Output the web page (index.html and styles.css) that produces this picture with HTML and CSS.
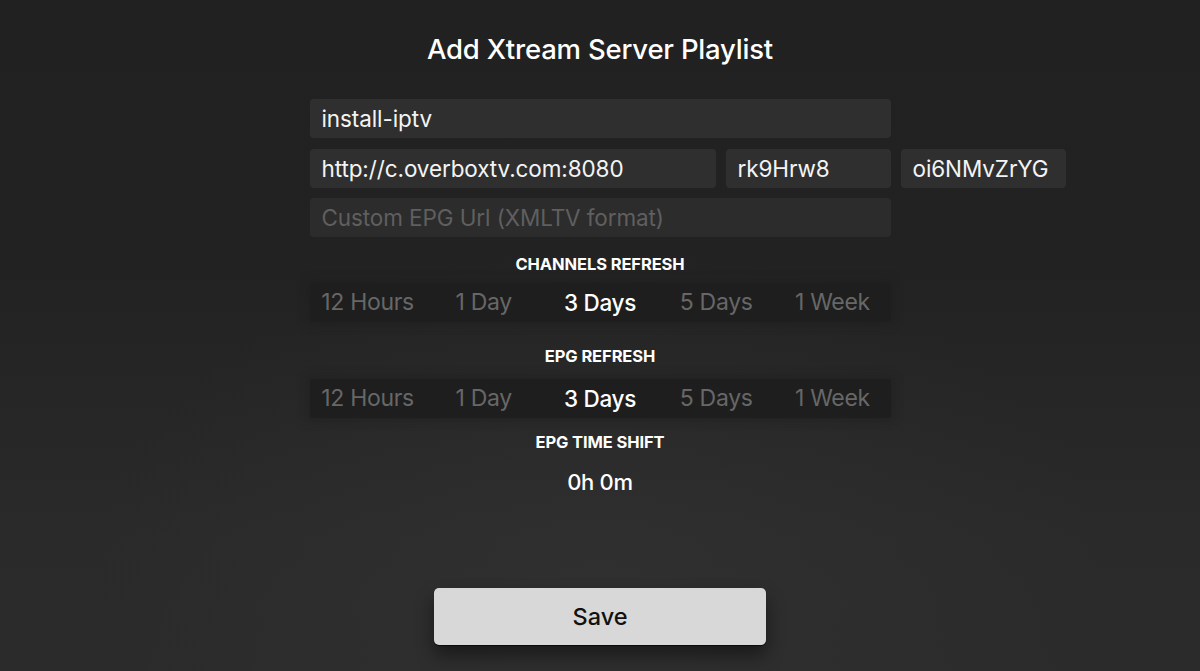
FILE: index.html
```html
<!DOCTYPE html>
<html>
<head>
<meta charset="utf-8">
<link rel="stylesheet" href="styles.css">
</head>
<body>
<main class="screen">
  <h1 class="title">Add Xtream Server Playlist</h1>
  <section class="form">
    <div class="field">install-iptv</div>
    <div class="row">
      <div class="field">http://c.overboxtv.com:8080</div>
      <div class="field">rk9Hrw8</div>
      <div class="field">oi6NMvZrYG</div>
    </div>
    <div class="field placeholder">Custom EPG Url (XMLTV format)</div>
  </section>
  <div class="label label-channels">CHANNELS REFRESH</div>
  <div class="segments seg-channels">
    <span class="opt">12 Hours</span>
    <span class="opt">1 Day</span>
    <span class="opt selected">3 Days</span>
    <span class="opt">5 Days</span>
    <span class="opt">1 Week</span>
  </div>
  <div class="label label-epg">EPG REFRESH</div>
  <div class="segments seg-epg">
    <span class="opt">12 Hours</span>
    <span class="opt">1 Day</span>
    <span class="opt selected">3 Days</span>
    <span class="opt">5 Days</span>
    <span class="opt">1 Week</span>
  </div>
  <div class="label label-shift">EPG TIME SHIFT</div>
  <div class="shift-value">0h 0m</div>
  <button class="save">Save</button>
</main>
</body>
</html>
```
FILE: styles.css
```css
* { box-sizing: border-box; }
html, body {
  margin: 0;
  padding: 0;
  height: 671px;
  overflow: hidden;
}
body {
  font-family: Inter, "Noto Sans", sans-serif;
  color: #fff;
  background:
    radial-gradient(ellipse 60% 70% at 50% 85%, rgba(60,60,60,0.3), rgba(0,0,0,0) 70%),
    linear-gradient(180deg, #212121 0%, #222222 40%, #2a2a2a 80%, #2b2b2b 100%);
}
.screen {
  display: flex;
  flex-direction: column;
  align-items: center;
  height: 671px;
}
.title {
  margin: 33px 0 0 0;
  font-size: 27.5px;
  line-height: 32px;
  font-weight: 500;
  letter-spacing: -0.2px;
}
.form {
  width: 581px;
  margin-top: 34px;
  display: flex;
  flex-direction: column;
  gap: 10px;
}
.row {
  display: grid;
  grid-template-columns: 406px 165px 165px;
  gap: 10px;
  width: 581px;
}
.field {
  height: 39px;
  background: #2f2f2f;
  border-radius: 4px;
  padding: 0 12px;
  font-size: 22.5px;
  line-height: 39px;
  color: #f4f4f4;
  white-space: nowrap;
  letter-spacing: -0.1px;
}
.form > .field:first-child { margin-bottom: 1px; }
.placeholder { color: #5f5f5f; background: #2c2c2c; }
.label {
  font-size: 16.5px;
  line-height: 20px;
  font-weight: 700;
  letter-spacing: -0.1px;
  color: #fff;
}
.label-channels { margin-top: 17px; }
.label-epg { margin-top: 24px; }
.label-shift { margin-top: 14px; }
.segments {
  width: 581px;
  height: 39px;
  display: grid;
  grid-template-columns: repeat(5, 1fr);
  align-items: center;
  background: #1e1e1e;
  border-radius: 3px;
  box-shadow: 0 0 8px 3px rgba(30,30,30,0.5);
}
.seg-channels { margin-top: 9px; }
.seg-epg { margin-top: 13px; }
.opt {
  text-align: center;
  font-size: 23px;
  line-height: 39px;
  color: #676767;
  letter-spacing: -0.3px;
}
.opt.selected { color: #fff; font-weight: 500; font-size: 22.5px; }
.shift-value {
  margin-top: 16px;
  font-size: 22px;
  line-height: 28px;
  font-weight: 500;
  letter-spacing: -0.3px;
}
.save {
  margin-top: 92px;
  width: 332px;
  height: 57px;
  border: none;
  border-radius: 5px;
  background: #d8d8d8;
  color: #111;
  font-family: Inter, "Noto Sans", sans-serif;
  font-size: 23.5px;
  font-weight: 500;
  box-shadow: 0 10px 18px rgba(0,0,0,0.45), 0 1px 0 #111;
}
```
